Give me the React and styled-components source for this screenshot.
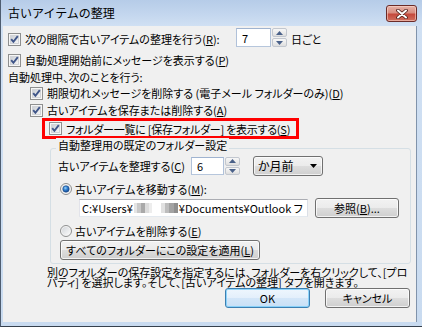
import React, { useId } from 'react';
import styled, { createGlobalStyle } from 'styled-components';

const GlobalStyle = createGlobalStyle`
  html, body {
    margin: 0;
    padding: 0;
    background: #ffffff;
  }
  body {
    font-family: "Noto Sans CJK JP", "Noto Sans", sans-serif;
    font-size: 11px;
    color: #000;
  }
`;

const Window = styled.div`
  width: 422px;
  height: 327px;
  box-sizing: border-box;
  display: flex;
  flex-direction: column;
  background: linear-gradient(180deg, #b6cce8 0px, #c3d6ee 14px, #d0e0f3 26px, #c9dbf0 100%);
  border-left: 1px solid #4e5d70;
  border-bottom: 1px solid #36414e;
  padding: 0 5px 4px 2px;
  overflow: hidden;
`;

const TitleBar = styled.div`
  height: 26px;
  flex: none;
  display: flex;
  justify-content: space-between;
  align-items: flex-start;
`;

const Title = styled.div`
  margin: 5px 0 0 5px;
  line-height: 16px;
  font-size: 12px;
`;

const CloseButton = styled.div`
  width: 31px;
  height: 17px;
  margin-top: 5px;
  box-sizing: border-box;
  border: 1px solid #6b2b28;
  border-radius: 3px;
  background: linear-gradient(180deg, #e6b2a8 0%, #d88d80 45%, #c5493c 55%, #d0705f 100%);
  box-shadow: inset 0 0 0 1px rgba(255, 220, 210, 0.55);
  display: flex;
  align-items: center;
  justify-content: center;
`;

const Client = styled.div`
  flex: 1;
  display: flex;
  flex-direction: column;
  background: #f0f0f0;
  border-right: 1px solid #8093ab;
  padding: 2px 0 0 5px;
  font-size: 11px;
  font-feature-settings: "palt";
`;

const Row = styled.div`
  display: flex;
  align-items: center;
  height: ${(p) => p.$h}px;
  margin-left: ${(p) => p.$indent || 0}px;
  margin-top: ${(p) => p.$mt || 0}px;
  white-space: nowrap;
  line-height: 14px;
`;

const ItemLabel = styled.label`
  display: flex;
  align-items: center;
  gap: ${(p) => p.$gap ?? 4}px;
  width: ${(p) => (p.$w ? `${p.$w}px` : 'auto')};
  margin-left: ${(p) => p.$ml || 0}px;
  flex: none;
`;

const FieldLabel = styled.span`
  display: block;
  flex: none;
  width: ${(p) => (p.$w ? `${p.$w}px` : 'auto')};
  margin-left: ${(p) => p.$ml || 0}px;
`;

const Icon = styled.svg`
  display: block;
  flex: none;
`;

const Highlight = styled.div`
  box-sizing: border-box;
  width: 257px;
  height: 21px;
  margin-left: 34px;
  border: 3px solid #ff0000;
  padding-left: 4px;
  display: flex;
  align-items: center;
  white-space: nowrap;
  line-height: 14px;
  letter-spacing: -0.25px;
`;

const GroupBox = styled.div`
  box-sizing: border-box;
  width: 361px;
  margin: 9px 0 0 42px;
  border: 1px solid #d5dfe5;
  border-radius: 3px;
  padding: 0 7px 3px 7px;
  display: flex;
  flex-direction: column;
`;

const GroupLabel = styled.div`
  margin: -11px 0 0 -2px;
  padding: 0 2px;
  width: fit-content;
  background: #f0f0f0;
  line-height: 14px;
  white-space: nowrap;
`;

const TextBox = styled.div`
  box-sizing: border-box;
  width: ${(p) => p.$w}px;
  height: ${(p) => p.$h || 18}px;
  margin-left: ${(p) => p.$ml || 0}px;
  align-self: ${(p) => p.$self || 'center'};
  background: #fff;
  border: 1px solid ${(p) => (p.$blue ? '#9fb3d0' : '#abadb3')};
  border-bottom-color: ${(p) => (p.$blue ? '#b6c6dc' : '#e3e9ef')};
  border-left-color: ${(p) => (p.$blue ? '#b0c1d9' : '#e2e3ea')};
  border-right-color: ${(p) => (p.$blue ? '#b0c1d9' : '#dbdfe6')};
  padding-left: ${(p) => p.$pl ?? 4}px;
  display: flex;
  align-items: center;
  overflow: hidden;
  white-space: nowrap;
  line-height: 14px;
`;

const Spin = styled.div`
  width: 15px;
  height: ${(p) => p.$h}px;
  margin-left: 1px;
  align-self: ${(p) => p.$self || 'center'};
  display: flex;
  flex-direction: column;
  gap: 1px;
`;

const SpinHalf = styled.div`
  flex: 1;
  box-sizing: border-box;
  border: 1px solid #c2c7cf;
  border-radius: 2px;
  background: linear-gradient(180deg, #f7f7f7 0%, #ececec 50%, #dedede 100%);
  display: flex;
  align-items: center;
  justify-content: center;
`;

const Combo = styled.div`
  box-sizing: border-box;
  width: 70px;
  height: 20px;
  margin-left: 13px;
  border: 1px solid #707070;
  border-radius: 3px;
  background: linear-gradient(180deg, #f2f2f2 0%, #ebebeb 50%, #dddddd 51%, #cfcfcf 100%);
  box-shadow: inset 0 0 0 1px rgba(255, 255, 255, 0.7);
  padding: 0 5px 0 4px;
  display: flex;
  align-items: center;
  justify-content: space-between;
  font-size: 12px;
`;

const PushButton = styled.div`
  box-sizing: border-box;
  width: ${(p) => p.$w}px;
  height: 20px;
  margin-left: ${(p) => p.$ml || 0}px;
  border: 1px solid ${(p) => (p.$default ? '#3c7fb1' : '#707070')};
  border-radius: 3px;
  background: ${(p) =>
    p.$default
      ? 'linear-gradient(180deg, #eef6fd 0%, #e3effb 50%, #d3e6f8 51%, #c8e0f6 100%)'
      : 'linear-gradient(180deg, #f2f2f2 0%, #ebebeb 50%, #dddddd 51%, #cfcfcf 100%)'};
  box-shadow: inset 0 0 0 1px ${(p) => (p.$default ? 'rgba(120, 205, 250, 0.8)' : 'rgba(255, 255, 255, 0.75)')};
  display: flex;
  align-items: center;
  justify-content: center;
  line-height: 14px;
  white-space: nowrap;
`;

const Description = styled.div`
  margin: 3px 0 0 39px;
  line-height: 10px;
  white-space: nowrap;
`;

const ButtonRow = styled.div`
  display: flex;
  justify-content: flex-end;
  gap: 15px;
  margin-top: 1px;
  padding-right: 6px;
`;

const Mosaic = styled.span`
  display: inline-flex;
  height: 10px;
  margin: 0 1px;
`;

const MosaicCell = styled.span`
  display: block;
  width: ${(p) => p.$w}px;
  height: 10px;
  background: ${(p) => p.$c};
`;

const safeId = (id) => id.replace(/[^a-zA-Z0-9]/g, '');

const CheckBox = () => {
  const id = safeId(useId());
  return (
    <Icon width="13" height="13" viewBox="0 0 13 13">
      <defs>
        <linearGradient id={id} x1="0" y1="0" x2="1" y2="1">
          <stop offset="0" stopColor="#c9cdd3" />
          <stop offset="1" stopColor="#f7f7f7" />
        </linearGradient>
      </defs>
      <rect x="0.5" y="0.5" width="12" height="12" fill="#f6f6f6" stroke="#8e8f8f" />
      <rect x="2.5" y="2.5" width="8" height="8" fill={`url(#${id})`} stroke="#d2d4d8" />
      <path d="M3.2 6.2 L5.4 8.8 L9.8 3.2" fill="none" stroke="#3f5589" strokeWidth="1.9" />
    </Icon>
  );
};

const Radio = ({ on }) => {
  const id = safeId(useId());
  return (
    <Icon width="12" height="12" viewBox="0 0 12 12">
      <defs>
        <linearGradient id={`${id}r`} x1="0" y1="0" x2="1" y2="1">
          <stop offset="0" stopColor="#d3d6da" />
          <stop offset="1" stopColor="#fafafa" />
        </linearGradient>
        <radialGradient id={`${id}d`} cx="0.4" cy="0.35" r="0.7">
          <stop offset="0" stopColor="#9ad3fb" />
          <stop offset="0.45" stopColor="#2f7fd0" />
          <stop offset="1" stopColor="#123f86" />
        </radialGradient>
      </defs>
      <circle cx="6" cy="6" r="5.5" fill="#f4f4f4" stroke="#8e8f8f" />
      <circle cx="6" cy="6" r="4" fill={`url(#${id}r)`} />
      {on && <circle cx="6" cy="6" r="3.2" fill={`url(#${id}d)`} stroke="#1d4c8a" strokeWidth="0.6" />}
    </Icon>
  );
};

const Arrow = ({ up }) => (
  <Icon width="7" height="4" viewBox="0 0 7 4">
    <path d={up ? 'M0 4 L3.5 0 L7 4 Z' : 'M0 0 L7 0 L3.5 4 Z'} fill={up === undefined ? '#000' : '#4a6189'} />
  </Icon>
);

const SpinButtons = ({ h, self }) => (
  <Spin $h={h} $self={self}>
    <SpinHalf>
      <Arrow up />
    </SpinHalf>
    <SpinHalf>
      <Arrow up={false} />
    </SpinHalf>
  </Spin>
);

const Check = ({ children, w }) => (
  <ItemLabel $w={w}>
    <CheckBox />
    <span>{children}</span>
  </ItemLabel>
);

const RadioItem = ({ on, children }) => (
  <ItemLabel $gap={3} $ml={2}>
    <Radio on={on} />
    <span>{children}</span>
  </ItemLabel>
);

const mosaic = [
  ['#e4e4e4', 3],
  ['#c9c9c9', 4],
  ['#a9a9a9', 4],
  ['#dcdcdc', 4],
  ['#ededed', 3],
  ['#ffffff', 9],
  ['#e1e1e1', 4],
  ['#bdbdbd', 4],
  ['#a3a3a3', 5],
  ['#8f8f8f', 4],
];

export default function App() {
  return (
    <>
      <GlobalStyle />
      <Window>
        <TitleBar>
          <Title>古いアイテムの整理</Title>
          <CloseButton>
            <Icon width="12" height="10" viewBox="0 0 12 10">
              <path d="M2 1.5 L10 8.5 M10 1.5 L2 8.5" stroke="#4a1a16" strokeWidth="3.6" strokeLinecap="round" />
              <path d="M2 1.5 L10 8.5 M10 1.5 L2 8.5" stroke="#ffffff" strokeWidth="2" strokeLinecap="round" />
            </Icon>
          </CloseButton>
        </TitleBar>
        <Client>
          <Row $h={22}>
            <Check w={228}>
              次の間隔で古いアイテムの整理を行う(<u>R</u>):
            </Check>
            <TextBox $w={35} $h={19} $self="flex-start" $blue $pl={5}>
              7
            </TextBox>
            <SpinButtons h={19} self="flex-start" />
            <FieldLabel $ml={4}>日ごと</FieldLabel>
          </Row>
          <Row $h={20}>
            <Check>
              自動処理開始前にメッセージを表示する(<u>P</u>)
            </Check>
          </Row>
          <Row $h={14}>自動処理中、次のことを行う:</Row>
          <Row $h={18} $indent={22}>
            <Check>
              期限切れメッセージを削除する (電子メール フォルダーのみ)(<u>D</u>)
            </Check>
          </Row>
          <Row $h={16} $indent={22}>
            <Check>
              古いアイテムを保存または削除する(<u>A</u>)
            </Check>
          </Row>
          <Highlight>
            <Check>
              フォルダー一覧に [保存フォルダー] を表示する(<u>S</u>)
            </Check>
          </Highlight>
          <GroupBox>
            <GroupLabel>自動整理用の既定のフォルダー設定</GroupLabel>
            <Row $h={22} $mt={3}>
              <FieldLabel $w={133}>
                古いアイテムを整理する(<u>C</u>)
              </FieldLabel>
              <TextBox $w={33} $h={18} $blue $pl={5}>
                6
              </TextBox>
              <SpinButtons h={18} />
              <Combo>
                <span>か月前</span>
                <Arrow />
              </Combo>
            </Row>
            <Row $h={19} $mt={2}>
              <RadioItem on>
                古いアイテムを移動する(<u>M</u>):
              </RadioItem>
            </Row>
            <Row $h={20}>
              <TextBox $w={229} $h={18} $ml={21} $pl={2}>
                C:¥Users¥
                <Mosaic>
                  {mosaic.map(([c, w], i) => (
                    <MosaicCell key={i} $c={c} $w={w} />
                  ))}
                </Mosaic>
                ¥Documents¥Outlook フ
              </TextBox>
              <PushButton $w={84} $ml={7}>
                参照(<u>B</u>)...
              </PushButton>
            </Row>
            <Row $h={18} $mt={4}>
              <RadioItem>
                古いアイテムを削除する(<u>E</u>)
              </RadioItem>
            </Row>
            <Row $h={20}>
              <PushButton $w={200} $ml={2}>
                すべてのフォルダーにこの設定を適用(<u>L</u>)
              </PushButton>
            </Row>
          </GroupBox>
          <Description>
            別のフォルダーの保存設定を指定するには、フォルダーを右クリックして、[プロ
            <br />
            パティ] を選択します。そして、[古いアイテムの整理] タブを開きます。
          </Description>
          <ButtonRow>
            <PushButton $w={85} $default>
              OK
            </PushButton>
            <PushButton $w={85}>キャンセル</PushButton>
          </ButtonRow>
        </Client>
      </Window>
    </>
  );
}
